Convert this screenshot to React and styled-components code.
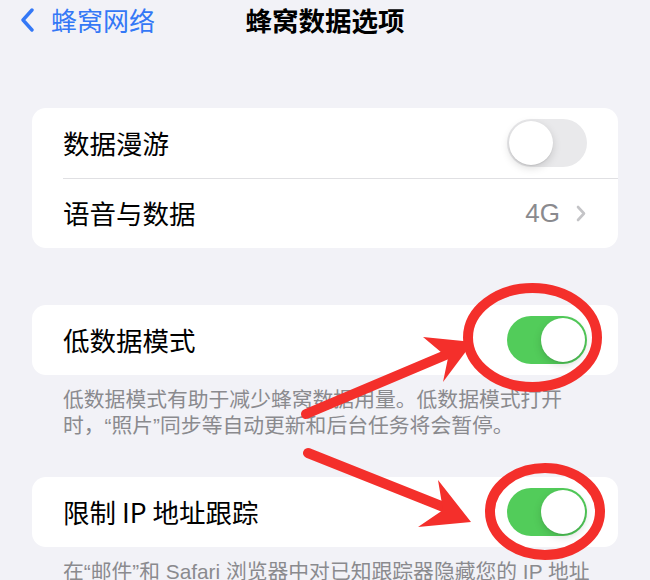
import React from 'react';
import styled, { createGlobalStyle } from 'styled-components';

const GlobalStyle = createGlobalStyle`
  body {
    margin: 0;
    background: #f2f2f7;
    font-family: "Noto Sans CJK SC", "Noto Sans", sans-serif;
  }
`;

const App = () => {
  return (
    <Page>
      <GlobalStyle />

      <NavBar>
        <BackLink>
          <svg width="14" height="24" viewBox="0 0 14 24">
            <polyline points="12,2 3,12 12,22" fill="none" stroke="#3478f6" strokeWidth="3.4" strokeLinecap="round" strokeLinejoin="round" />
          </svg>
          <span>蜂窝网络</span>
        </BackLink>
        <Title>蜂窝数据选项</Title>
        <div />
      </NavBar>

      <Content>
        <Card $top={68}>
          <Row>
            <Label>数据漫游</Label>
            <Toggle $on={false} />
          </Row>
          <Row $divider>
            <Label>语音与数据</Label>
            <Detail>
              4G
              <svg width="10" height="17" viewBox="0 0 10 17">
                <polyline points="2,2 8,8.5 2,15" fill="none" stroke="#c4c4c7" strokeWidth="2.6" strokeLinecap="round" strokeLinejoin="round" />
              </svg>
            </Detail>
          </Row>
        </Card>

        <Card $top={57}>
          <Row>
            <Label>低数据模式</Label>
            <Toggle $on />
          </Row>
        </Card>
        <Footer>
          低数据模式有助于减少蜂窝数据用量。低数据模式打开时，“照片”同步等自动更新和后台任务将会暂停。
        </Footer>

        <Card $top={38}>
          <Row>
            <Label>限制 IP 地址跟踪</Label>
            <Toggle $on />
          </Row>
        </Card>
        <Footer $nowrap>在“邮件”和 Safari 浏览器中对已知跟踪器隐藏您的 IP 地址</Footer>
      </Content>

      <Marks width="650" height="580" viewBox="0 0 650 580">
        <g fill="none" stroke="#f42f2b" strokeWidth="10">
          <ellipse cx="532.5" cy="337.5" rx="64.5" ry="49.5" />
          <ellipse cx="545" cy="511.5" rx="55" ry="43.5" />
        </g>
        <g stroke="#f42f2b" strokeWidth="10" strokeLinecap="round">
          <line x1="306" y1="414" x2="448" y2="354" />
          <line x1="308" y1="453" x2="446" y2="508" />
        </g>
        <g fill="#f42f2b">
          <polygon points="423,337 473,342 443,382 448,358" />
          <polygon points="438,480 471,522 418,527 443,510" />
        </g>
      </Marks>
    </Page>
  );
};

export default App;

const Page = styled.div`
  position: relative;
  width: 650px;
  height: 580px;
  overflow: hidden;
  background: #f2f2f7;
`;

const NavBar = styled.div`
  display: grid;
  grid-template-columns: 1fr auto 1fr;
  align-items: center;
  height: 40px;
`;

const BackLink = styled.div`
  display: flex;
  align-items: center;
  gap: 17px;
  padding-left: 20px;
  color: #3478f6;
  font-size: 26px;
  line-height: 1;
`;

const Title = styled.div`
  font-size: 26.5px;
  font-weight: 700;
  color: #000;
  line-height: 1;
`;

const Content = styled.div`
  padding: 0 32px;
`;

const Card = styled.div`
  margin-top: ${(p) => p.$top}px;
  background: #fff;
  border-radius: 14px;
  overflow: hidden;
`;

const Row = styled.div`
  position: relative;
  display: flex;
  align-items: center;
  justify-content: space-between;
  height: 70px;
  padding: 0 31px;

  ${(p) =>
    p.$divider &&
    `
    &::before {
      content: '';
      position: absolute;
      top: 0;
      left: 31px;
      right: 0;
      height: 1px;
      background: #e0e0e3;
    }
  `}
`;

const Label = styled.span`
  font-size: 26.5px;
  color: #000;
  line-height: 1;
`;

const Detail = styled.span`
  display: flex;
  align-items: center;
  gap: 16px;
  font-family: "Liberation Sans", "Noto Sans", sans-serif;
  font-size: 26px;
  color: #8a8a8e;
  margin-right: 1px;
`;

const Toggle = styled.span`
  position: relative;
  width: 80px;
  height: 48px;
  border-radius: 24px;
  background: ${(p) => (p.$on ? '#52cc5a' : '#e9e9eb')};
  flex-shrink: 0;

  &::after {
    content: '';
    position: absolute;
    top: 2px;
    left: ${(p) => (p.$on ? '34px' : '2px')};
    width: 44px;
    height: 44px;
    border-radius: 50%;
    background: #fff;
    box-shadow: 0 3px 8px rgba(0, 0, 0, 0.15), 0 1px 1px rgba(0, 0, 0, 0.08);
  }
`;

const Footer = styled.div`
  padding: 12px 31px 0;
  font-family: "Liberation Sans", "Noto Sans CJK SC", sans-serif;
  font-size: 20.8px;
  line-height: 26px;
  color: #8a8a8e;
  white-space: ${(p) => (p.$nowrap ? 'nowrap' : 'normal')};
`;

const Marks = styled.svg`
  position: absolute;
  top: 0;
  left: 0;
  pointer-events: none;
`;
